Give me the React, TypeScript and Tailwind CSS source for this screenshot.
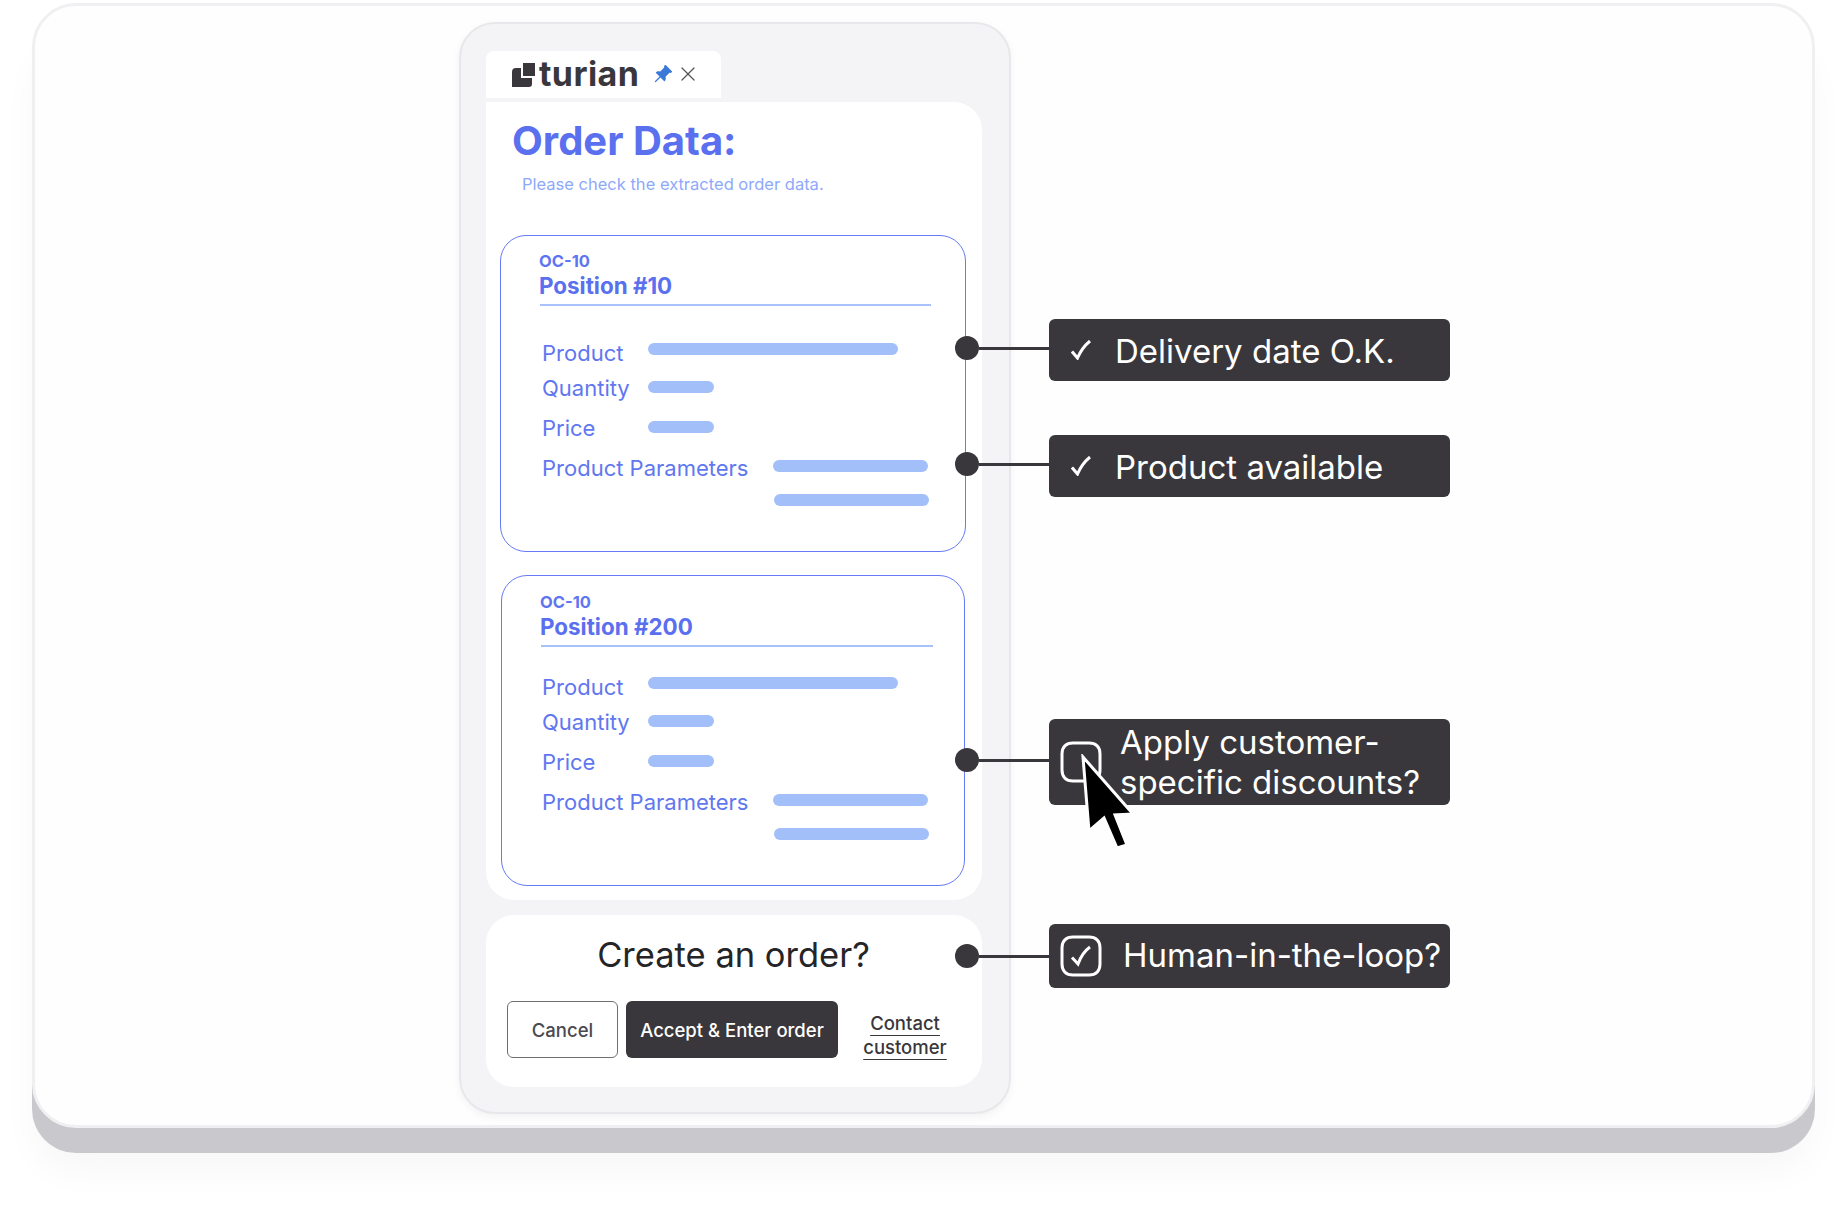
import { X } from "lucide-react";
import { BsPinAngleFill } from "react-icons/bs";

function Logo() {
  return (
    <svg width="23" height="24" viewBox="0 0 23 24" fill="#39373b">
      <rect x="11" y="0" width="12" height="13" />
      <path d="M0 9Q0 5 4 5H9V15H20V21Q20 24 17 24H0Z" />
    </svg>
  );
}

function Tick() {
  return (
    <svg width="20" height="20" viewBox="0 0 20 20" fill="none" stroke="#fff" strokeWidth="3">
      <path d="M1 11.5L6.5 18C9.5 11 13.5 5.5 19 1" />
    </svg>
  );
}

function CheckBox({ checked }: { checked?: boolean }) {
  return (
    <svg width="42" height="42" viewBox="0 0 42 42" fill="none" stroke="#fff" className="shrink-0">
      <path strokeWidth="3" d="M13 2H29C36 2 40 6 40 13V29C40 36 36 40 29 40H13C6 40 2 36 2 29V13C2 6 6 2 13 2Z" />
      {checked && <path strokeWidth="3" d="M12 22.5L18 29C21 21 25 15.5 30 12" />}
    </svg>
  );
}

function Cursor() {
  return (
    <svg width="60" height="98" viewBox="-3 -3 60 98" className="absolute left-[31px] top-[35px]">
      <path d="M0 0L6 74L21 61L34 91L44 88L32 58L50 57Z" fill="#000" stroke="#fff" strokeWidth="3" />
    </svg>
  );
}

function Bar({ className }: { className: string }) {
  return <div className={`h-3 rounded-full bg-[#a3bffa] ${className}`} />;
}

function Row({ label, wide, children }: { label: string; wide?: boolean; children: React.ReactNode }) {
  return (
    <div className="flex">
      <span className={`h-[30px] shrink-0 text-[22px] leading-[30px] text-[#6177f0] ${wide ? "w-[231px]" : "w-[106px]"}`}>
        {label}
      </span>
      <div>{children}</div>
    </div>
  );
}

function PositionCard({ title, className, rowsClass }: { title: string; className: string; rowsClass: string }) {
  return (
    <div className={`rounded-[26px] border-[1.5px] border-[#667bf5] ${className}`}>
      <div className="text-[16.5px] font-bold leading-5 text-[#5f75f0]">OC-10</div>
      <div className="text-[22.4px] font-bold leading-[30px] text-[#5a70ef]">{title}</div>
      <div className="mt-[3px] ml-px h-[2px] bg-[#a9c1fb]" />
      <div className={rowsClass}>
        <Row label="Product">
          <Bar className="mt-[5px] w-[250px]" />
        </Row>
        <div className="mt-[5px]">
          <Row label="Quantity">
            <Bar className="mt-2 w-[66px]" />
          </Row>
        </div>
        <div className="mt-[10px]">
          <Row label="Price">
            <Bar className="mt-2 w-[66px]" />
          </Row>
        </div>
        <div className="mt-[10px]">
          <Row label="Product Parameters" wide>
            <Bar className="mt-[7px] w-[155px]" />
            <Bar className="mt-[22px] ml-px w-[155px]" />
          </Row>
        </div>
      </div>
    </div>
  );
}

function Callout({ className, lineClass, children }: { className: string; lineClass?: string; children: React.ReactNode }) {
  return (
    <div className={`flex items-center ${className}`}>
      <div className={`flex items-center ${lineClass ?? ""}`}>
        <div className="h-6 w-6 rounded-full bg-[#39373b]" />
        <div className="h-[3px] w-[70px] bg-[#39373b]" />
      </div>
      <div className="relative flex h-full w-[401px] items-center rounded-md bg-[#39373b] text-[33px] text-white">
        {children}
      </div>
    </div>
  );
}

export default function App() {
  return (
    <div className="h-[1211px] w-[1847px] overflow-hidden bg-white pl-8 pt-[3px] font-['Inter',sans-serif]">
      <div className="flex h-[1125px] w-[1783px] rounded-[44px] border-[3px] border-[#f0eff2] bg-[#fefefe] pl-[424px] pt-4 shadow-[0_25px_0_#c9c9cd,0_45px_35px_rgba(0,0,0,0.03)]">
        {/* Order panel */}
        <div className="h-[1092px] w-[552px] shrink-0 rounded-[36px] border-2 border-[#e8e7eb] bg-[#f4f3f6] pl-[25px] pt-[27px] shadow-[0_3px_8px_rgba(0,0,0,0.05)]">
          <div className="flex h-[47px] w-[235px] items-center rounded-t-lg bg-white pl-[26px]">
            <Logo />
            <span className="ml-[4px] mb-[2px] w-[114px] text-[34px] font-bold leading-none tracking-[0.4px] text-[#39373b]">
              turian
            </span>
            <BsPinAngleFill className="mb-[2px] h-5 w-5 text-[#3b78d8]" />
            <X className="mb-[2px] ml-[3px] h-6 w-6 text-[#55545a]" strokeWidth={1.2} />
          </div>

          <div className="mt-1 h-[798px] w-[496px] rounded-[28px] rounded-tl-none bg-white">
            <h1 className="pl-[26px] pt-[15px] text-[40px] font-bold leading-[48px] text-[#5a70ef]">Order Data:</h1>
            <p className="mt-[9px] pl-9 text-[16.5px] leading-5 text-[#8ea9fb]">Please check the extracted order data.</p>
            <PositionCard
              title="Position #10"
              className="ml-[14px] mt-[41px] h-[317px] w-[466px] pl-[38px] pr-[34px] pt-[15px]"
              rowsClass="ml-[3px] mt-[32px]"
            />
            <PositionCard
              title="Position #200"
              className="ml-[15px] mt-[23px] h-[311px] w-[464px] pl-[38px] pr-[31px] pt-[16px]"
              rowsClass="ml-[2px] mt-[25px]"
            />
          </div>

          <div className="mt-[15px] h-[172px] w-[496px] rounded-[28px] bg-white pl-[21px] pt-5">
            <div className="w-[453px] text-center text-[34.5px] leading-10 text-[#252427]">Create an order?</div>
            <div className="mt-[26px] flex">
              <button className="h-[57px] w-[111px] rounded-md border border-[#6f6e73] pt-[2px] text-[18.5px] font-medium text-[#4b4a4e]">
                Cancel
              </button>
              <button className="ml-2 h-[57px] w-[212px] rounded-md bg-[#39373b] pt-[2px] text-[18.5px] font-medium text-white">
                Accept &amp; Enter order
              </button>
              <div className="ml-6 flex w-[86px] flex-col items-center pt-[10px] text-[18.5px] font-medium leading-6 text-[#39373b] underline underline-offset-[5px]">
                <span>Contact</span>
                <span>customer</span>
              </div>
            </div>
          </div>
        </div>

        {/* Callouts */}
        <div className="relative ml-[-56px] flex flex-col pt-[297px]">
          <Callout className="h-[62px]" lineClass="mb-1">
            <span className="ml-[22px] mr-[24px]">
              <Tick />
            </span>
            <span className="pt-[3px]">Delivery date O.K.</span>
          </Callout>
          <Callout className="mt-[54px] h-[62px]" lineClass="mb-1">
            <span className="ml-[22px] mr-[24px]">
              <Tick />
            </span>
            <span className="pt-[3px]">Product available</span>
          </Callout>
          <Callout className="mt-[222px] h-[86px]" lineClass="mb-1">
            <span className="ml-[11px] mr-[18px]">
              <CheckBox />
            </span>
            <span className="leading-10">
              Apply customer-
              <br />
              specific discounts?
            </span>
            <Cursor />
          </Callout>
          <Callout className="mt-[119px] h-[64px]">
            <span className="ml-[11px] mr-[21px]">
              <CheckBox checked />
            </span>
            Human-in-the-loop?
          </Callout>
        </div>
      </div>
    </div>
  );
}
